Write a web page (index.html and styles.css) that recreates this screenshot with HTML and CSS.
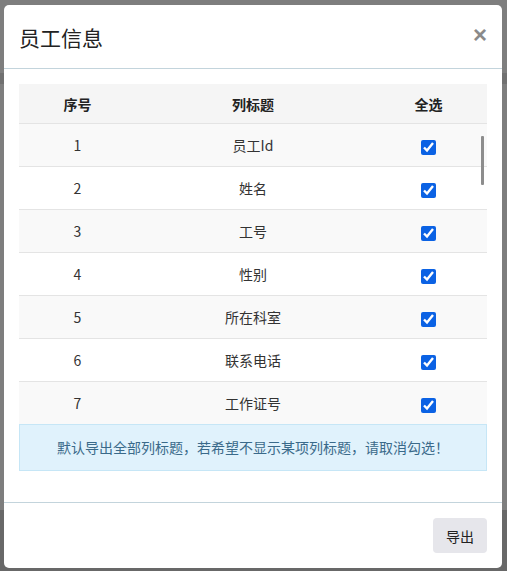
FILE: index.html
```html
<!DOCTYPE html>
<html lang="zh-CN">
<head>
  <meta charset="UTF-8" />
  <meta name="viewport" content="width=device-width, initial-scale=1.0" />
  <title>员工信息</title>
  <link rel="stylesheet" href="styles.css">
</head>
<body>
  <div class="modal">
    <div class="modal-header">
      <h4 class="modal-title">员工信息</h4>
      <button class="close" type="button">&times;</button>
    </div>

    <div class="modal-body">
      <div class="table-wrap">
        <table class="col-table">
          <thead>
            <tr>
              <th class="col-no">序号</th>
              <th>列标题</th>
              <th class="col-check">全选</th>
            </tr>
          </thead>
          <tbody>
            <tr><td>1</td><td>员工Id</td><td><input type="checkbox" checked></td></tr>
            <tr><td>2</td><td>姓名</td><td><input type="checkbox" checked></td></tr>
            <tr><td>3</td><td>工号</td><td><input type="checkbox" checked></td></tr>
            <tr><td>4</td><td>性别</td><td><input type="checkbox" checked></td></tr>
            <tr><td>5</td><td>所在科室</td><td><input type="checkbox" checked></td></tr>
            <tr><td>6</td><td>联系电话</td><td><input type="checkbox" checked></td></tr>
            <tr><td>7</td><td>工作证号</td><td><input type="checkbox" checked></td></tr>
          </tbody>
        </table>
        <div class="scroll-thumb"></div>
      </div>
      <div class="alert-info">默认导出全部列标题，若希望不显示某项列标题，请取消勾选！</div>
    </div>

    <div class="modal-footer">
      <button class="btn" type="button">导出</button>
    </div>
  </div>
</body>
</html>
```

FILE: styles.css
```css
html {
  height: 100%;
}
body {
  margin: 0;
  min-height: 100%;
  font-family: "Noto Sans CJK SC", "Noto Sans", sans-serif;
  font-size: 14px;
  color: #333;
  /* dimmed page behind the dialog */
  background:
    linear-gradient(to bottom,
      transparent 0, transparent 73px,
      #707070 73px, #707070 84px,
      transparent 84px, transparent 510px,
      #686868 510px),
    #7e7e7e;
}
.modal {
  margin: 5px 5px 3px 4px;
  width: 498px;
  background: #fff;
  border-radius: 5px;
  overflow: hidden;
}
.modal-header {
  display: flex;
  align-items: center;
  justify-content: space-between;
  height: 63px;
  padding: 0 15px;
  border-bottom: 1px solid #c3d4dc;
}
.modal-title {
  margin: 0;
  font-size: 21px;
  font-weight: normal;
  color: #222;
  line-height: 30px;
}
.close {
  padding: 0;
  margin-top: -4px;
  border: none;
  background: none;
  font-family: "Liberation Sans", sans-serif;
  font-size: 24px;
  font-weight: bold;
  line-height: 1;
  color: #8a8a8a;
  cursor: pointer;
}
.modal-body {
  padding: 15px;
}
.table-wrap {
  position: relative;
}
.col-table {
  width: 100%;
  border-collapse: collapse;
  table-layout: fixed;
}
.col-table th,
.col-table td {
  padding: 0;
  text-align: center;
  vertical-align: middle;
}
.col-table th {
  height: 39px;
  background: #f5f5f5;
  font-weight: bold;
  color: #222;
}
.col-no,
.col-check {
  width: 25%;
}
.col-table td {
  height: 42px;
  border-top: 1px solid #e4e4e4;
  color: #333;
}
.col-table tbody tr:nth-child(odd) td {
  background: #f9f9f9;
}
.col-table input[type="checkbox"] {
  width: 15px;
  height: 15px;
  margin: 0;
  accent-color: #0b62e4;
  vertical-align: middle;
}
.scroll-thumb {
  position: absolute;
  right: 3px;
  top: 52px;
  width: 3px;
  height: 49px;
  background: #8d8d8d;
  border-radius: 1px;
}
.alert-info {
  margin-bottom: 16px;
  padding: 12px 10px;
  line-height: 21px;
  text-align: center;
  background: #e0f2fc;
  border: 1px solid #c6e6f6;
  color: #3a6a8a;
}
.modal-footer {
  display: flex;
  justify-content: flex-end;
  padding: 15px;
  border-top: 1px solid #c3d4dc;
}
.btn {
  width: 54px;
  height: 35px;
  padding: 0;
  border: none;
  border-radius: 4px;
  background: #e6e6eb;
  font-family: inherit;
  font-size: 14px;
  color: #222;
  cursor: pointer;
}
```
